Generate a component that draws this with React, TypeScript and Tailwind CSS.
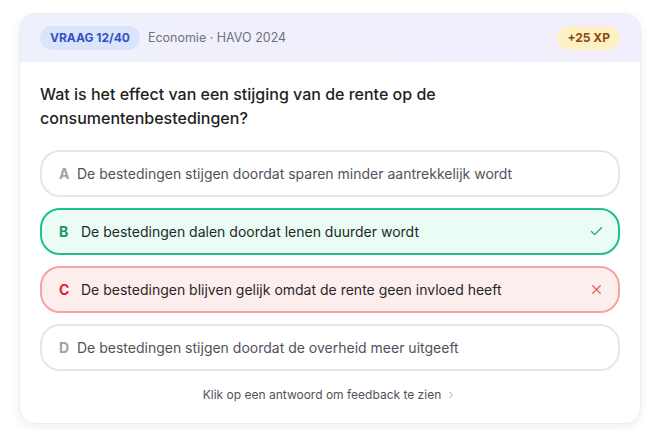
import { Check, X, ChevronRight } from 'lucide-react';

type OptionState = 'idle' | 'correct' | 'wrong';

interface Option {
  letter: string;
  text: string;
  state: OptionState;
}

const options: Option[] = [
  { letter: 'A', text: 'De bestedingen stijgen doordat sparen minder aantrekkelijk wordt', state: 'idle' },
  { letter: 'B', text: 'De bestedingen dalen doordat lenen duurder wordt', state: 'correct' },
  { letter: 'C', text: 'De bestedingen blijven gelijk omdat de rente geen invloed heeft', state: 'wrong' },
  { letter: 'D', text: 'De bestedingen stijgen doordat de overheid meer uitgeeft', state: 'idle' },
];

function AnswerRow({ option }: { option: Option }) {
  if (option.state === 'correct') {
    return (
      <div className="flex h-[47px] items-center rounded-[20px] border-2 border-[#1cc08e] bg-[#eafcf3] pl-[17px] pr-[14px]">
        <span className="w-[12px] text-[14px] font-bold text-[#129a6c]">{option.letter}</span>
        <span className="ml-[10px] flex-1 text-[14px] text-[#27272a]">{option.text}</span>
        <Check className="h-[15px] w-[15px] text-[#1aa876]" strokeWidth={2} />
      </div>
    );
  }
  if (option.state === 'wrong') {
    return (
      <div className="flex h-[47px] items-center rounded-[20px] border-2 border-[#f5a3a3] bg-[#fdeeee] pl-[17px] pr-[14px]">
        <span className="w-[12px] text-[14px] font-bold text-[#e11d2e]">{option.letter}</span>
        <span className="ml-[10px] flex-1 text-[14px] text-[#27272a]">{option.text}</span>
        <X className="h-[15px] w-[15px] text-[#ef5a5a]" strokeWidth={2} />
      </div>
    );
  }
  return (
    <div className="flex h-[47px] items-center rounded-[20px] border-2 border-[#e6e6e8] bg-white pl-[17px] pr-5">
      <span className="w-[12px] text-[14px] font-bold text-[#a1a1aa]">{option.letter}</span>
      <span className="ml-[6px] flex-1 text-[14px] text-[#52525b]">{option.text}</span>
    </div>
  );
}

export default function App() {
  return (
    <div className="min-h-screen bg-white pt-[13px]" style={{ fontFamily: 'Inter, "Noto Sans", sans-serif' }}>
      <div className="mx-auto w-[622px] overflow-hidden rounded-2xl border border-[#ececf0] bg-white shadow-[0_4px_12px_rgba(0,0,0,0.06)]">
        {/* Header */}
        <div className="flex h-[48px] items-center justify-between bg-gradient-to-r from-[#eef1fc] to-[#f2eefd] px-5">
          <div className="flex items-center gap-[8px]">
            <span className="flex h-6 items-center rounded-full bg-[#dce4fb] px-[10px] text-[12px] font-bold text-[#2f54c8]">
              VRAAG 12/40
            </span>
            <span className="text-[12.5px] text-[#71717a]">Economie · HAVO 2024</span>
          </div>
          <span className="flex h-6 items-center rounded-full bg-[#fdf0c4] px-[10px] text-[12px] font-bold text-[#8a4a0c]">
            +25 XP
          </span>
        </div>

        {/* Body */}
        <div className="px-5 pb-5 pt-5">
          <h2 className="text-[16px] font-medium leading-6 text-[#1f1f23]">
            Wat is het effect van een stijging van de rente op de consumentenbestedingen?
          </h2>

          <div className="mt-5 flex flex-col gap-[11px]">
            {options.map((o) => (
              <AnswerRow key={o.letter} option={o} />
            ))}
          </div>

          <div className="mt-4 flex h-4 items-center justify-center gap-1 text-[12px] text-[#52525b]">
            Klik op een antwoord om feedback te zien
            <ChevronRight className="h-3 w-3 text-[#a1a1aa]" strokeWidth={2} />
          </div>
        </div>
      </div>
    </div>
  );
}
